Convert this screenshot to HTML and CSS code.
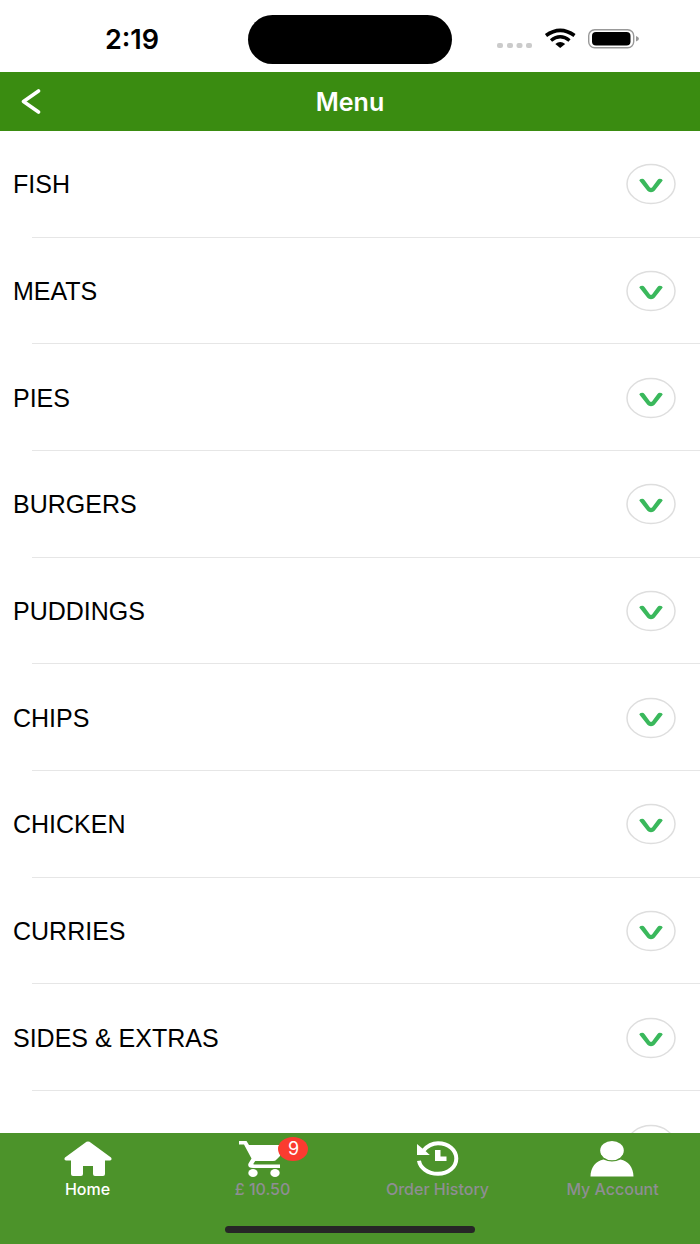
FILE: index.html
```html
<!DOCTYPE html>
<html lang="en">
<head>
<meta charset="utf-8">
<meta name="viewport" content="width=device-width, initial-scale=1">
<title>Menu</title>
<link rel="stylesheet" href="styles.css">
</head>
<body>
<div class="app">
  <div class="status">
    <span class="time">2:19</span>
    <span class="island"></span>
    <svg class="status-icons" width="144" height="24" viewBox="0 0 144 24" aria-hidden="true">
      <g fill="#cbcbcb"><rect x="0" y="15" width="6" height="5" rx="2"/><rect x="10" y="15" width="6" height="5" rx="2"/><rect x="19.500" y="15" width="6" height="5" rx="2"/><rect x="29" y="15" width="6" height="5" rx="2"/></g>
      <g fill="none" stroke="#000"><path d="M49 7.500Q63.200-2.800 77.500 7.500" stroke-width="3.600"/><path d="M54 12.500Q63.200 5 72.500 12.500" stroke-width="3.400"/></g>
      <path d="M58.300 16Q63.200 12 68.200 16L63.200 20Z"/>
      <rect x="91.700" y="1.700" width="45" height="18" rx="6" fill="#fff" stroke="#999" stroke-width="1.400"/>
      <rect x="95" y="4" width="38.500" height="13.500" rx="4"/>
      <path d="M139 8Q142 9 142 10.800T139 13.500Z" fill="#999"/>
    </svg>
  </div>
  <header class="nav">
    <button class="back" type="button" aria-label="Back"><svg width="20" height="26" viewBox="0 0 20 26"><path d="M17.500 2L2.500 12.500L17.500 23" fill="none" stroke="#fff" stroke-width="3.600" stroke-linecap="round" stroke-linejoin="round"/></svg></button>
    <h1 class="title">Menu</h1>
  </header>
  <main class="list">
    <button class="row" type="button"><span>FISH</span><svg class="toggle" viewBox="0 0 50 42"><use href="#toggle"/></svg></button>
    <button class="row" type="button"><span>MEATS</span><svg class="toggle" viewBox="0 0 50 42"><use href="#toggle"/></svg></button>
    <button class="row" type="button"><span>PIES</span><svg class="toggle" viewBox="0 0 50 42"><use href="#toggle"/></svg></button>
    <button class="row" type="button"><span>BURGERS</span><svg class="toggle" viewBox="0 0 50 42"><use href="#toggle"/></svg></button>
    <button class="row" type="button"><span>PUDDINGS</span><svg class="toggle" viewBox="0 0 50 42"><use href="#toggle"/></svg></button>
    <button class="row" type="button"><span>CHIPS</span><svg class="toggle" viewBox="0 0 50 42"><use href="#toggle"/></svg></button>
    <button class="row" type="button"><span>CHICKEN</span><svg class="toggle" viewBox="0 0 50 42"><use href="#toggle"/></svg></button>
    <button class="row" type="button"><span>CURRIES</span><svg class="toggle" viewBox="0 0 50 42"><use href="#toggle"/></svg></button>
    <button class="row" type="button"><span>SIDES &amp; EXTRAS</span><svg class="toggle" viewBox="0 0 50 42"><use href="#toggle"/></svg></button>
    <button class="row row-cut" type="button" aria-label="Next category"><svg class="toggle" viewBox="0 0 50 42"><use href="#toggle"/></svg></button>
  </main>
  <nav class="tabs">
    <a class="tab active" href="#home">
      <svg width="48" height="36" viewBox="0 0 48 36"><path d="M22.500 .8Q24 0 25.500 .8L47 16.500Q48.500 19 46 19.500H41V33Q41 35 39 35H31Q29 35 29 33V25H19V33Q19 35 17 35H9Q7 35 7 33V19.500H2Q-.500 19 1 16.500Z" fill="#fff"/></svg>
      <span>Home</span>
    </a>
    <a class="tab" href="#basket">
      <span class="cart">
        <svg width="48" height="36" viewBox="-1 1 48 36"><g fill="#fff"><path d="M0 1H7.500L10 5H41V16L37.500 19.500Q36.500 21 34 21H16.200L14.400 23.800Q14.200 24.500 15 24.500H41V28H14Q8 28 9.500 23.500L12.500 18.500L5 4.500H0Z"/><ellipse cx="14" cy="33" rx="4.700" ry="4"/><ellipse cx="36" cy="33" rx="4.700" ry="4"/></g></svg>
        <span class="badge">9</span>
      </span>
      <span>£ 10.50</span>
    </a>
    <a class="tab" href="#history">
      <svg width="44" height="36" viewBox="-2 0 44 36"><path d="M6.500 9.500C11 4 16 2.200 21 2.200C31.500 2.200 39.300 9 39.300 17.500S31.500 32.800 21 32.800C10.500 32.800 3 26.500 2 19.800" fill="none" stroke="#fff" stroke-width="4"/><path d="M0 3V14H12.800L9 10.500Z" fill="#fff"/><path d="M18 9H23.500V15.500H29.500V20H18Z" fill="#fff"/></svg>
      <span>Order History</span>
    </a>
    <a class="tab" href="#account">
      <svg width="44" height="36" viewBox="0 0 44 36"><path d="M.500 35.500C.500 26 6 20 13.500 18.400Q22 22.500 30.500 18.400C38 20 43.500 26 43.500 35.500Z" fill="#fff"/><ellipse cx="22" cy="9.600" rx="11.800" ry="9.600" fill="#fff"/></svg>
      <span>My Account</span>
    </a>
    <span class="home-bar"></span>
  </nav>
</div>
<svg class="defs" width="0" height="0" aria-hidden="true">
  <defs><g id="toggle"><ellipse cx="25" cy="21" rx="24" ry="19.500" fill="#fff" stroke="#dedede" stroke-width="1.500"/><path d="M13.300 17.500Q13.500 15.800 16 15.800Q17.500 15.700 18.500 17L24.200 24.700H25.800L31.500 17Q32.500 15.700 34 15.800Q36.500 15.800 36.700 17.500L28.600 27.800Q27.500 29.200 25 29.200T21.400 27.800Z" fill="#3ab85c"/></g></defs>
</svg>
</body>
</html>
```
FILE: styles.css
```css
* { box-sizing: border-box; }
body { margin: 0; background: #fff; color: #000; font-family: Inter, "Liberation Sans", sans-serif; }
button { border: 0; padding: 0; background: none; font: inherit; color: inherit; cursor: pointer; }
svg { display: block; flex: none; }
.defs { position: absolute; }
.app { display: flex; flex-direction: column; min-height: 100vh; }
.status { display: grid; grid-template-columns: 1fr 204px 1fr; align-items: center; height: 72px; padding-top: 7px; }
.time { padding-left: 16px; text-align: center; font-size: 27px; line-height: 32px; font-weight: 600; }
.island { height: 49px; border-radius: 28px; background: #000; }
.status-icons { margin-left: 45px; }
.nav { display: grid; grid-template-columns: 62px 1fr 62px; align-items: center; height: 59px; background: #3a8c11; color: #fff; }
.back { display: flex; justify-content: center; height: 59px; align-items: center; }
.title { margin: 0; text-align: center; font-size: 25px; line-height: 32px; font-weight: 600; }
.list { flex: 1; display: grid; grid-template-rows: repeat(9, minmax(72px, 1fr)) 42px; }
.row { display: flex; align-items: center; justify-content: space-between; padding: 0 24px 0 13px; text-align: left; font-family: "Liberation Sans", Arial, sans-serif; font-size: 25px; line-height: 32px; background: linear-gradient(#e6e6e6, #e6e6e6) 32px 100% / 100% 1px no-repeat; }
.row-cut { align-items: flex-start; justify-content: flex-end; padding-top: 33px; overflow: hidden; background: none; }
.toggle { width: 50px; height: 42px; }
.tabs { position: sticky; bottom: 0; display: grid; grid-template-columns: repeat(4, 1fr); grid-template-rows: 1fr auto; justify-items: center; height: 111px; padding: 8px 0 11px; background: #4c932a; }
.tab { display: flex; flex-direction: column; align-items: center; gap: 3px; font-size: 16px; line-height: 18px; font-weight: 500; color: #8e8e93; text-decoration: none; white-space: nowrap; }
.active { color: #fff; }
.cart { position: relative; }
.badge { position: absolute; top: -4px; left: 40px; width: 30px; border-radius: 50%; background: #fb3b30; color: #fff; text-align: center; font-size: 18px; line-height: 24px; font-weight: 400; }
.home-bar { grid-column: 1 / -1; width: 250px; height: 7px; border-radius: 4px; background: #262626; }
```
